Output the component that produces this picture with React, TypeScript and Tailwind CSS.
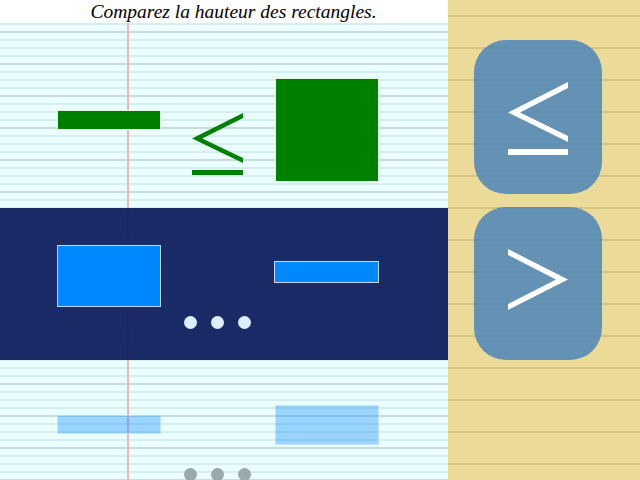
const paper =
  "bg-[#ebffff] bg-[linear-gradient(to_right,transparent_127px,#f0b6b6_127px,#f0b6b6_129px,transparent_129px),repeating-linear-gradient(to_bottom,transparent_0,transparent_8px,#c8dcdc_8px,#c8dcdc_10px,transparent_10px,transparent_32px),repeating-linear-gradient(to_bottom,#d5eef0_0,#d5eef0_2px,transparent_2px,transparent_8px)]";

const legal =
  "bg-[#ecdb98] bg-[repeating-linear-gradient(to_bottom,transparent_0,transparent_15px,#d6c383_15px,#d6c383_17px,transparent_17px,transparent_32px)]";

function Dots({ color }: { color: string }) {
  return (
    <div className="flex gap-[14px]">
      {[0, 1, 2].map((i) => (
        <span key={i} className={`w-[13px] h-[13px] rounded-full ${color}`} />
      ))}
    </div>
  );
}

function LessEqual({ w, h, t, fill }: { w: number; h: number; t: number; fill: string }) {
  // "<" drawn as a filled chevron, bar underneath
  const mid = (h - t - 6) / 2;
  const bot = h - t - 6 - 1;
  const inner = (w * t) / (bot / 2);
  return (
    <svg width={w} height={h} viewBox={`0 0 ${w} ${h}`} aria-label="≤" role="img">
      <polygon
        fill={fill}
        points={`${w},0 ${w},${t} ${inner},${mid} ${w},${bot - t} ${w},${bot} 0,${mid}`}
      />
      <rect x={0} y={h - t} width={w} height={t} fill={fill} />
    </svg>
  );
}

function Greater() {
  return (
    <svg width={60} height={61} viewBox="0 0 60 61" aria-label=">" role="img">
      <polygon fill="#ffffff" points="0,0 60,30.5 0,61 0,55 48,30.5 0,6" />
    </svg>
  );
}

export default function App() {
  return (
    <div className="w-[640px] h-[480px] flex overflow-hidden font-['Liberation_Serif',serif]">
      <div className="w-[448px] flex flex-col">
        <div className="h-[23px] bg-white flex justify-center pl-[19px]">
          <p className="italic text-[19.5px] leading-[23px] text-black whitespace-nowrap">Comparez la hauteur des rectangles.</p>
        </div>
        <div className={`flex-1 flex flex-col ${paper}`}>
          <div className="h-[185px] flex items-start pl-[57px]">
            <div className="w-[104px] h-[20px] mt-[87px] bg-[#008000] border border-[#e6f6e6]" />
            <div className="w-[67px] ml-[23px] mt-[90px] flex justify-center">
              <LessEqual w={51} h={62} t={5} fill="#008000" />
            </div>
            <div className="w-[104px] h-[104px] ml-[24px] mt-[55px] bg-[#008000] border border-[#e6f6e6]" />
          </div>
          <div className="h-[152px] flex items-start pl-[57px] bg-[rgba(4,20,88,0.9)]">
            <div className="w-[104px] h-[62px] mt-[37px] bg-[#0088ff] border border-[#c4d6f0]" />
            <div className="w-[67px] ml-[23px] mt-[108px]">
              <Dots color="bg-[#dcefff]" />
            </div>
            <div className="w-[105px] h-[22px] ml-[23px] mt-[53px] bg-[#0088ff] border border-[#c4d6f0]" />
          </div>
          <div className="flex-1 flex items-start pl-[57px]">
            <div className="w-[104px] h-[19px] mt-[55px] bg-[#0088ff]/35 border border-[#d6f0ff]/60" />
            <div className="w-[67px] ml-[23px] mt-[108px]">
              <Dots color="bg-[#9aa9a9]" />
            </div>
            <div className="w-[104px] h-[40px] ml-[24px] mt-[45px] bg-[#0088ff]/35 border border-[#d6f0ff]/60" />
          </div>
        </div>
      </div>
      <div className={`w-[192px] flex flex-col items-start pl-[26px] pt-[40px] gap-[13px] ${legal}`}>
        <button className="w-[128px] h-[154px] rounded-[32px] bg-[rgba(75,133,185,0.85)] flex items-center justify-center pt-[3px]">
          <LessEqual w={60} h={73} t={6} fill="#ffffff" />
        </button>
        <button className="w-[128px] h-[153px] rounded-[32px] bg-[rgba(75,133,185,0.85)] flex items-center justify-center pb-[8px]">
          <Greater />
        </button>
      </div>
    </div>
  );
}
